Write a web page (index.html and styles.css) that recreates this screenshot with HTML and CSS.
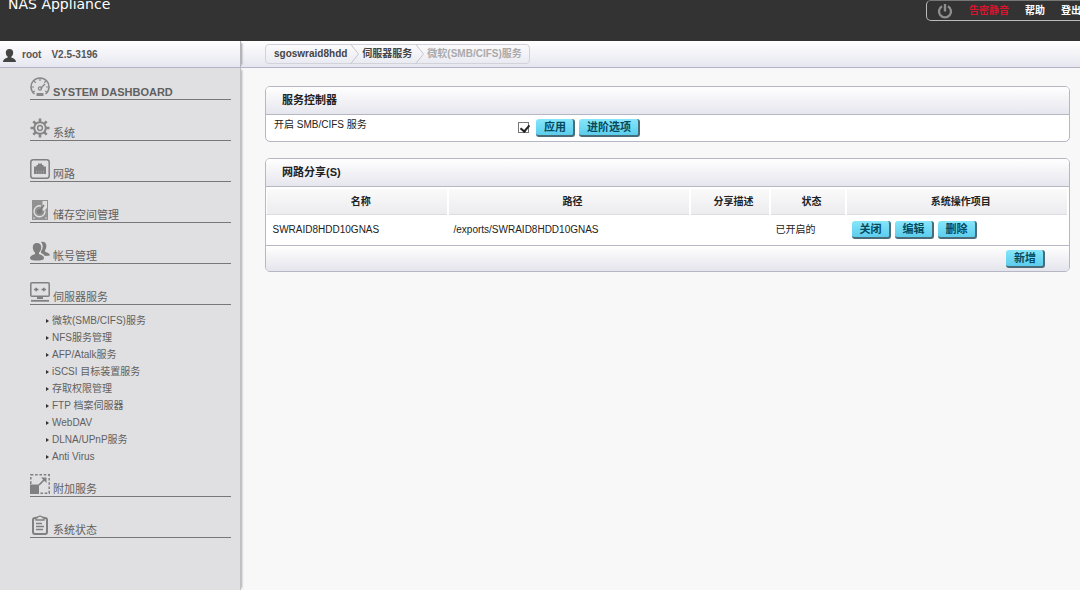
FILE: index.html
```html
<!DOCTYPE html>
<html lang="zh-CN">
<head>
<meta charset="utf-8">
<title>NAS Appliance</title>
<link rel="stylesheet" href="styles.css">
</head>
<body>
<header class="top">
  <h1 class="brand">NAS Appliance</h1>
  <nav class="tools">
    <button class="power" type="button" aria-label="电源">
      <svg width="16" height="16" viewBox="0 0 16 16" fill="none" stroke="#8d8d8d" stroke-width="2.4"><path d="M5 3.2A6 6 0 1 0 11 3.2M8 1v7.5"/></svg>
    </button>
    <a class="tool alarm" href="#">告密静音</a>
    <a class="tool" href="#">帮助</a>
    <a class="tool" href="#">登出</a>
  </nav>
</header>
<div class="bar">
  <div class="user">
    <svg width="13" height="13" viewBox="0 0 13 13" fill="#444"><path d="M6.500 0C8.900 0 10.300 1.500 10.200 3.700C10.100 5.600 9.300 7 8.300 7.700V8.600C9.500 9.300 12.800 9.600 13 13H0C.2 9.600 3.500 9.300 4.700 8.600V7.700C3.700 7 2.900 5.600 2.800 3.700C2.700 1.500 4.100 0 6.500 0Z"/></svg>
    <span>root</span>
    <span>V2.5-3196</span>
  </div>
  <nav class="crumbs">
    <a class="crumb" href="#">sgoswraid8hdd</a>
    <svg class="sep" width="9" height="20" viewBox="0 0 9 20" fill="none" stroke="#c6c6ce"><path d="M.5 0L8.500 10L.5 20"/></svg>
    <a class="crumb" href="#">伺服器服务</a>
    <svg class="sep" width="9" height="20" viewBox="0 0 9 20" fill="none" stroke="#c6c6ce"><path d="M.5 0L8.500 10L.5 20"/></svg>
    <span class="crumb current">微软(SMB/CIFS)服务</span>
  </nav>
</div>
<div class="layout">
  <nav class="side">
    <a class="item" href="#">
      <svg width="20" height="20" viewBox="0 0 20 20" fill="none" stroke="#888"><path d="M4.500 17A9 9 0 1 1 15.500 17" stroke-width="1.500"/><path d="M10 1v3M4 4l1.800 1.800M16 4l-1.800 1.800M1 10h3M16 10h3M3 15l2-1M17 15l-2-1" stroke-width="1.200"/><path d="M10.500 11.500L15 7" stroke-width="1.500"/><circle cx="10" cy="11.500" r="1.600" stroke-width="1.200"/><path d="M6.500 17.500h7" stroke-width="3"/></svg>
      <span>SYSTEM DASHBOARD</span>
    </a>
    <a class="item" href="#">
      <svg width="20" height="20" viewBox="0 0 20 20" fill="none" stroke="#858585"><circle cx="10" cy="10" r="5.800" stroke-width="2"/><circle cx="10" cy="10" r="2.400" stroke-width="1.500"/><path d="M10 .5v3.500M10 16v3.500M.5 10H4M16 10h3.500M3.300 3.300l2.400 2.400M14.300 14.300l2.400 2.400M3.300 16.700l2.400-2.400M14.300 5.700l2.400-2.400" stroke-width="2.600"/></svg>
      <span>系统</span>
    </a>
    <a class="item" href="#">
      <svg width="20" height="20" viewBox="0 0 20 20"><rect x=".8" y=".8" width="18.400" height="18.400" rx="2.500" fill="none" stroke="#808080" stroke-width="1.500"/><path d="M4 15V7.500h2.500V6H8V4.500h4V6h1.500v1.500H16V15Z" fill="#808080"/><path d="M6.500 11.500v3.500M8.800 11.500v3.500M11.200 11.500v3.500M13.500 11.500v3.500" stroke="#b4b4b6" stroke-width=".5"/></svg>
      <span>网路</span>
    </a>
    <a class="item" href="#">
      <svg width="20" height="20" viewBox="0 0 20 20"><path d="M2 0h16v20H2Z" fill="#929292"/><path d="M12.500 1H17V8L14 11L12.500 10Z" fill="#e0e0e2"/><path d="M11 6A5.500 5.500 0 1 0 15 10.500" fill="none" stroke="#e0e0e2" stroke-width="1.400"/><circle cx="9.500" cy="11.500" r="2.500" fill="#7c7c7c"/><path d="M9.500 11.500L14 5" stroke="#7c7c7c" stroke-width="1.500"/><circle cx="4" cy="18" r=".8" fill="#ddd"/><circle cx="16" cy="18" r=".8" fill="#ddd"/></svg>
      <span>储存空间管理</span>
    </a>
    <a class="item" href="#">
      <svg width="20" height="20" viewBox="0 0 20 20" fill="#7e7e7e"><path d="M11 1C13 0 16 1 16.300 4C16.500 6.500 16 8 15 9V10.500C16 11.500 19.500 11.500 20 14.500L15 15C14 13.500 12.500 12.500 11 12V10C12.500 8.500 13 6 12.500 4C12.200 2.600 11.800 2 11 1Z"/><path d="M7 2C10 2 11.300 4 11.200 6.500C11.100 9 10.200 10.600 9 11.500V13C10.500 14 13.500 14 14 17C14 19 11 19.500 7 19.500S0 19 0 17C.5 14 3.500 14 5 13V11.500C3.800 10.600 2.900 9 2.800 6.500C2.700 4 4 2 7 2Z"/></svg>
      <span>帐号管理</span>
    </a>
    <a class="item" href="#">
      <svg width="20" height="20" viewBox="0 0 20 20" fill="none" stroke="#808080" stroke-width="1.500"><rect x=".8" y=".8" width="18.400" height="13.400" rx="1"/><path d="M4 7.500h4.500M11.500 7.500H16" stroke-width="1.300"/><path d="M6.200 5.700v3.600M13.800 5.700v3.600" stroke-width="1.800"/><path d="M10 14v3M7 16h6" stroke-width="2"/><path d="M1 18.800h18" stroke-width="1.800"/></svg>
      <span>伺服器服务</span>
    </a>
    <ul class="sub">
      <li><a href="#">微软(SMB/CIFS)服务</a></li>
      <li><a href="#">NFS服务管理</a></li>
      <li><a href="#">AFP/Atalk服务</a></li>
      <li><a href="#">iSCSI 目标装置服务</a></li>
      <li><a href="#">存取权限管理</a></li>
      <li><a href="#">FTP 档案伺服器</a></li>
      <li><a href="#">WebDAV</a></li>
      <li><a href="#">DLNA/UPnP服务</a></li>
      <li><a href="#">Anti Virus</a></li>
    </ul>
    <a class="item" href="#">
      <svg width="20" height="20" viewBox="0 0 20 20" fill="none" stroke="#808080"><rect x=".8" y=".8" width="18.400" height="18.400" stroke-width="1.500" stroke-dasharray="2.600 1.700"/><path d="M0 10.500h9V20H0Z" fill="#808080" stroke="none"/><path d="M9 11L15 5" stroke-width="1.700"/><path d="M11 3.500h5.500V9Z" fill="#808080" stroke="none"/></svg>
      <span>附加服务</span>
    </a>
    <a class="item" href="#">
      <svg width="20" height="20" viewBox="0 0 20 20" fill="none" stroke="#808080"><rect x="3" y="3" width="14" height="16" rx="2" stroke-width="2"/><path d="M6 2.500H7.500C8 .7 12 .7 12.500 2.500H14V5H6Z" fill="#e0e0e2" stroke-width="1.300"/><path d="M6 8.500h6M6 11.500h8M6 14.500h7" stroke-width="1.400"/></svg>
      <span>系统状态</span>
    </a>
  </nav>
  <main class="main">
    <section class="panel">
      <h2 class="title">服务控制器</h2>
      <form class="control">
        <label for="smb">开启 SMB/CIFS 服务</label>
        <div class="actions">
          <input class="check" type="checkbox" id="smb" checked>
          <button class="btn" type="button">应用</button>
          <button class="btn" type="button">进阶选项</button>
        </div>
      </form>
    </section>
    <section class="panel">
      <h2 class="title">网路分享(S)</h2>
      <table class="shares">
        <colgroup><col class="c1"><col class="c2"><col class="c3"><col class="c4"><col class="c5"></colgroup>
        <thead><tr><th>名称</th><th>路径</th><th>分享描述</th><th>状态</th><th>系统操作项目</th></tr></thead>
        <tbody><tr>
          <td>SWRAID8HDD10GNAS</td><td>/exports/SWRAID8HDD10GNAS</td><td></td><td>已开启的</td>
          <td><div class="actions"><button class="btn" type="button">关闭</button><button class="btn" type="button">编辑</button><button class="btn" type="button">删除</button></div></td>
        </tr></tbody>
      </table>
      <div class="foot"><button class="btn" type="button">新增</button></div>
    </section>
  </main>
</div>
</body>
</html>
```
FILE: styles.css
```css
* { box-sizing: border-box; }
body {
  margin: 0;
  min-height: 100vh;
  display: flex;
  flex-direction: column;
  overflow-x: hidden;
  background: #f8f8f8;
  color: #222;
  font: 10px/16px "Liberation Sans", "Noto Sans CJK SC", sans-serif;
}
a { color: inherit; text-decoration: none; }
svg { display: block; flex: none; }
button { font-family: inherit; }

.top {
  display: flex;
  justify-content: space-between;
  align-items: flex-start;
  height: 41px;
  padding-left: 8px;
  background: #333;
  color: #fff;
}
.brand { margin: 0; font: 14px/9px "DejaVu Sans", sans-serif; }
.tools {
  display: flex;
  align-items: center;
  gap: 16px;
  height: 21px;
  margin-right: -8px;
  padding: 0 6px 0 10px;
  border: 1px solid #bbb;
  border-top-color: #777;
  border-radius: 5px;
  font-weight: bold;
}
.power { padding: 0; border: 0; background: none; }
.tool { white-space: nowrap; }
.alarm { color: #d8152f; }

.bar {
  display: flex;
  height: 27px;
  border-bottom: 1px solid #b4b4c6;
  background: linear-gradient(#fff, #e6e6f0);
}
.user {
  display: flex;
  align-items: center;
  gap: 10px;
  width: 241px;
  padding: 2px 0 0 3px;
  border-right: 1px solid #b4b4ba;
  box-shadow: 3px 0 2px -2px #999;
  color: #555;
  font-weight: bold;
}
.user svg { margin-right: -4px; }
.crumbs {
  display: flex;
  align-items: center;
  gap: 3px;
  height: 20px;
  margin: 3px 0 0 24px;
  padding: 0 7px 0 8px;
  border: 1px solid #d2d2da;
  border-radius: 4px;
  color: #444;
  font-weight: bold;
}
.current { color: #aaa; }

.layout { display: flex; flex: 1; }
.side {
  width: 241px;
  flex: none;
  padding: 8px 9px 0 30px;
  border-right: 1px solid #c0c0c4;
  background: #e0e0e2;
  box-shadow: 3px 0 2px -2px #aaa;
  color: #606060;
}
.item {
  display: flex;
  align-items: flex-end;
  gap: 3px;
  height: 24px;
  margin-bottom: 17px;
  padding-bottom: 2px;
  border-bottom: 1px solid #777;
  font-size: 11px;
}
.item:first-child span { font-weight: bold; }
.item span { line-height: 10px; }
.sub { margin: -10px 0 8px; padding: 0 0 0 16px; list-style: none; }
.sub a { display: flex; align-items: center; gap: 3px; line-height: 17px; }
.sub a::before {
  content: "";
  border: 2px solid transparent;
  border-left: 3px solid #333;
  border-right: 0;
}

.main { flex: 1; padding: 18px 10px 0 24px; }
.panel {
  margin-bottom: 16px;
  overflow: hidden;
  border: 1px solid #b6b6c4;
  border-radius: 5px;
  background: #fff;
}
.title {
  margin: 0;
  padding: 0 16px;
  border-bottom: 1px solid #b6b6c4;
  background: linear-gradient(#fff, #e6e6ee);
  font-size: 11px;
  line-height: 27px;
}
.control {
  display: grid;
  grid-template-columns: 243px 1fr;
  padding: 2px 8px 4px;
}
.actions { display: flex; align-items: center; gap: 4px; }
.control .actions { padding: 2px 0 0 1px; }
.check {
  appearance: none;
  width: 11px;
  height: 11px;
  margin: 0 3px 2px 0;
  border: 1px solid #777;
  background: #fff;
}
.check:checked::after {
  content: "";
  display: block;
  width: 4px;
  height: 7px;
  margin: 0 0 0 3px;
  border: solid #222;
  border-width: 0 2px 2px 0;
  transform: rotate(40deg);
}
.btn {
  height: 18px;
  padding: 0 7px 0 8px;
  border: 0;
  border-right: 2px solid #4a6b78;
  border-bottom: 2px solid #4a6b78;
  border-radius: 3px;
  background: linear-gradient(#86e6fa, #5ccdec);
  color: #054a5e;
  font-size: 11px;
  font-weight: bold;
  line-height: 16px;
}
.shares {
  width: 100%;
  margin-top: 2px;
  border-collapse: collapse;
  table-layout: fixed;
}
.c1 { width: 181px; }
.c2 { width: 242px; }
.c3 { width: 80px; }
.c4 { width: 76px; }
th {
  height: 25px;
  padding: 2px 0 0 8px;
  border-right: 2px solid #fff;
  border-left: 1px solid #fff;
  border-bottom: 1px solid #dcdce2;
  background: linear-gradient(#fafafa, #ececf0);
}
td { height: 31px; padding: 0 0 0 6px; }
.foot {
  display: flex;
  justify-content: flex-end;
  align-items: center;
  height: 26px;
  padding-right: 24px;
  border-top: 1px solid #b6b6c4;
  background: linear-gradient(#fff, #e4e4ec);
}
```
